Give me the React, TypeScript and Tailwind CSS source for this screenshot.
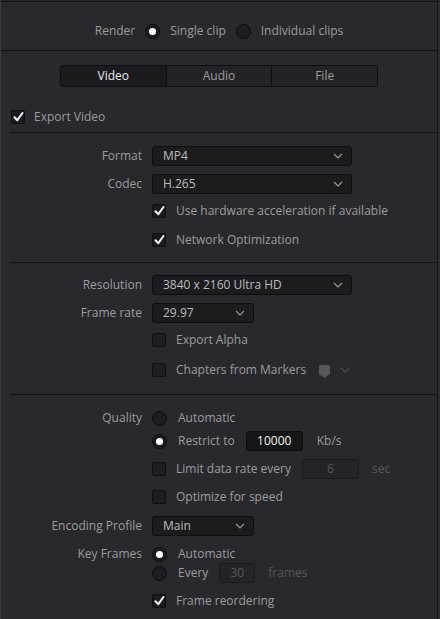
import React from "react";

const font = { fontFamily: '"Open Sans", "Noto Sans", Arial, sans-serif' };

function Chevron({ className = "" }: { className?: string }) {
  return (
    <svg width="10" height="6" viewBox="0 0 10 6" className={className}>
      <path d="M1 1l4 4 4-4" fill="none" stroke="currentColor" strokeWidth="1.2" />
    </svg>
  );
}

function Check() {
  return (
    <span className="w-[14px] h-[14px] rounded-[2px] bg-[#1b1b1e] border border-[#0e0e10] flex items-center justify-center shrink-0">
      <svg width="11" height="10" viewBox="0 0 11 10">
        <path d="M1.5 5.2l2.8 3L9.5 1" fill="none" stroke="#f2f2f2" strokeWidth="2" strokeLinecap="round" strokeLinejoin="round" />
      </svg>
    </span>
  );
}

function Box() {
  return <span className="w-[14px] h-[14px] rounded-[2px] bg-[#1e1e21] border border-[#0e0e10] shrink-0" />;
}

function Radio({ on }: { on?: boolean }) {
  return (
    <span className="w-[15px] h-[15px] rounded-full bg-[#1d1d20] border border-[#0c0c0e] flex items-center justify-center shrink-0">
      {on && <span className="w-[7px] h-[7px] rounded-full bg-white" />}
    </span>
  );
}

function Select({ value, wide }: { value: string; wide?: boolean }) {
  return (
    <div
      className={`h-[20px] ${wide ? "w-[200px]" : "w-[102px]"} rounded-[3px] bg-[#1c1c1f] border border-[#0d0d0f] flex items-center justify-between pl-[10px] pr-[8px] text-[#bdbdbd]`}
    >
      <span>{value}</span>
      <Chevron className="text-[#9a9a9a]" />
    </div>
  );
}

function Row({ label, className = "", children }: { label?: string; className?: string; children: React.ReactNode }) {
  return (
    <div className={`flex items-center h-[20px] ${className}`}>
      <div className="w-[141px] text-right text-[#9d9d9d] shrink-0">{label}</div>
      <div className="ml-[10px] flex items-center">{children}</div>
    </div>
  );
}

function Sep({ className = "" }: { className?: string }) {
  return <div className={`h-px bg-[#111113] ml-[9px] ${className}`} />;
}

export default function App() {
  return (
    <div className="w-[440px] h-[619px] bg-[#2c2c31] flex overflow-hidden text-[12px]" style={font}>
      <div className="w-[438px] h-full bg-[#28282d] border-l border-l-[#3a3a3f] border-r border-r-[#141416] flex flex-col">
        <div className="h-px mt-px bg-[#101012]" />
        <div className="h-[48px] pt-[10px] flex items-center justify-center gap-[10px] text-[#9d9d9d]">
          <span>Render</span>
          <Radio on />
          <span>Single clip</span>
          <Radio />
          <span>Individual clips</span>
        </div>
        <div className="h-px bg-[#101012]" />

        <div className="mt-[14px] mx-auto w-[318px] h-[22px] flex rounded-[2px] border border-[#0f0f11] bg-[#232327] overflow-hidden">
          <div className="flex-1 flex items-center justify-center bg-[#1b1b1e] text-[#ececec]">Video</div>
          <div className="flex-1 flex items-center justify-center border-l border-[#0f0f11] text-[#9d9d9d]">Audio</div>
          <div className="flex-1 flex items-center justify-center border-l border-[#0f0f11] text-[#9d9d9d]">File</div>
        </div>

        <div className="mt-[20px] h-[20px] flex items-center pl-[10px] gap-[9px] text-[#9d9d9d]">
          <Check />
          <span>Export Video</span>
        </div>
        <Sep className="mt-[5px]" />

        <Row label="Format" className="mt-[13px]">
          <Select value="MP4" wide />
        </Row>
        <Row label="Codec" className="mt-[8px]">
          <Select value="H.265" wide />
        </Row>
        <Row className="mt-[7px]">
          <Check />
          <span className="ml-[10px] text-[#9d9d9d]">Use hardware acceleration if available</span>
        </Row>
        <Row className="mt-[9px]">
          <Check />
          <span className="ml-[10px] text-[#9d9d9d]">Network Optimization</span>
        </Row>
        <Sep className="mt-[12px]" />

        <Row label="Resolution" className="mt-[12px]">
          <Select value="3840 x 2160 Ultra HD" wide />
        </Row>
        <Row label="Frame rate" className="mt-[8px]">
          <Select value="29.97" />
        </Row>
        <Row className="mt-[7px]">
          <Box />
          <span className="ml-[10px] text-[#9d9d9d]">Export Alpha</span>
        </Row>
        <Row className="mt-[10px]">
          <Box />
          <span className="ml-[10px] text-[#9d9d9d]">Chapters from Markers</span>
          <svg width="11" height="13" viewBox="0 0 11 13" className="ml-[13px] mt-[3px]">
            <path d="M0 1.5Q0 0 1.5 0h8Q11 0 11 1.5V9l-5.5 4L0 9z" fill="#55555a" />
          </svg>
          <Chevron className="ml-[10px] text-[#4c4c51]" />
        </Row>
        <Sep className="mt-[14px]" />

        <Row label="Quality" className="mt-[13px]">
          <Radio />
          <span className="ml-[11px] text-[#9d9d9d]">Automatic</span>
        </Row>
        <Row className="mt-[3px]">
          <Radio on />
          <span className="ml-[11px] text-[#9d9d9d]">Restrict to</span>
          <span className="ml-[11px] w-[57px] h-[20px] rounded-[3px] bg-[#161618] border border-[#0c0c0e] flex items-center justify-center text-[#f4f4f4]">
            10000
          </span>
          <span className="ml-[14px] text-[#9d9d9d]">Kb/s</span>
        </Row>
        <Row className="mt-[8px]">
          <Box />
          <span className="ml-[10px] text-[#9d9d9d]">Limit data rate every</span>
          <span className="ml-[11px] w-[57px] h-[20px] rounded-[3px] bg-[#242428] border border-[#1a1a1d] flex items-center justify-center text-[#57575c]">
            6
          </span>
          <span className="ml-[13px] text-[#57575c]">sec</span>
        </Row>
        <Row className="mt-[8px]">
          <Box />
          <span className="ml-[10px] text-[#9d9d9d]">Optimize for speed</span>
        </Row>
        <Row label="Encoding Profile" className="mt-[9px]">
          <Select value="Main" />
        </Row>
        <Row label="Key Frames" className="mt-[9px] !h-[18px]">
          <Radio on />
          <span className="ml-[11px] text-[#9d9d9d]">Automatic</span>
        </Row>
        <Row>
          <Radio />
          <span className="ml-[11px] text-[#9d9d9d]">Every</span>
          <span className="ml-[11px] w-[36px] h-[20px] rounded-[3px] bg-[#242428] border border-[#1a1a1d] flex items-center justify-center text-[#57575c]">
            30
          </span>
          <span className="ml-[13px] text-[#57575c]">frames</span>
        </Row>
        <Row className="mt-[8px]">
          <Check />
          <span className="ml-[10px] text-[#9d9d9d]">Frame reordering</span>
        </Row>
      </div>
    </div>
  );
}
